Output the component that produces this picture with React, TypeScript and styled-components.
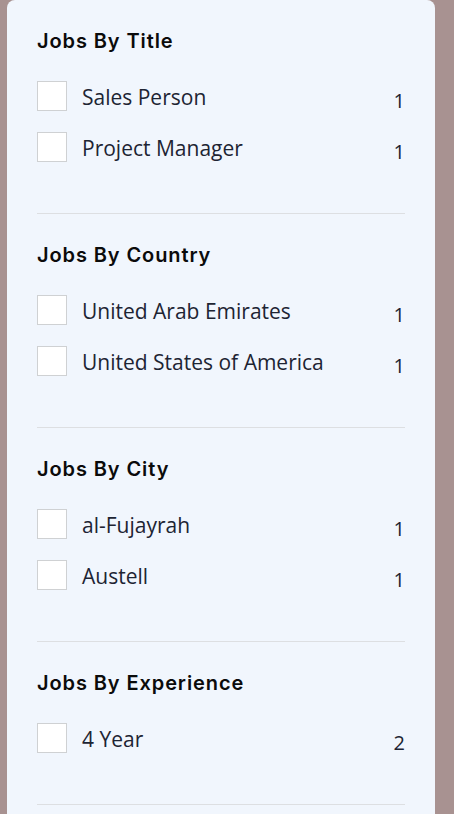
import React from "react";
import styled, { createGlobalStyle } from "styled-components";

const Global = createGlobalStyle`
  html, body { margin: 0; padding: 0; background: #a89291; }
  body { overflow: hidden; }
`;

const Page = styled.div`
  display: flex;
  padding-left: 7px;
  height: 814px;
`;

const Panel = styled.aside`
  width: 428px;
  box-sizing: border-box;
  background: #f1f6fd;
  border-radius: 8px 8px 0 0;
  padding: 0 30px;
  min-height: 900px;
`;

const Section = styled.section`
  padding: 29px 0 51px;
  border-bottom: 1px solid #dddfe2;
`;

const Heading = styled.h3`
  margin: 0 0 28px;
  font-family: "Inter", "Lato", sans-serif;
  font-weight: 600;
  font-size: 20px;
  line-height: 24px;
  color: #0b0b0b;
  letter-spacing: 0.9px;
`;

const List = styled.ul`
  list-style: none;
  margin: 0;
  padding: 0;
  display: flex;
  flex-direction: column;
  gap: 21px;
`;

const Row = styled.li`
  display: flex;
  align-items: center;
  height: 30px;
`;

const Box = styled.span`
  width: 28px;
  height: 28px;
  border: 1px solid #cfd1d3;
  background: #fff;
  flex: none;
`;

const Label = styled.span`
  margin-left: 15px;
  flex: 1;
  font-family: "Open Sans", sans-serif;
  font-size: 21px;
  line-height: 26px;
  color: #1d2433;
  margin-top: 2px;
`;

const Count = styled.span`
  font-family: "Open Sans", sans-serif;
  font-size: 20px;
  line-height: 26px;
  color: #1d2433;
  margin-top: 9px;
`;

const data = [
  { title: "Jobs By Title", items: [["Sales Person", 1], ["Project Manager", 1]] },
  { title: "Jobs By Country", items: [["United Arab Emirates", 1], ["United States of America", 1]] },
  { title: "Jobs By City", items: [["al-Fujayrah", 1], ["Austell", 1]] },
  { title: "Jobs By Experience", items: [["4 Year", 2]] },
];

export default function App() {
  return (
    <>
      <Global />
      <Page>
        <Panel>
          {data.map((s) => (
            <Section key={s.title}>
              <Heading>{s.title}</Heading>
              <List>
                {s.items.map(([label, n]) => (
                  <Row key={label as string}>
                    <Box />
                    <Label>{label}</Label>
                    <Count>{n}</Count>
                  </Row>
                ))}
              </List>
            </Section>
          ))}
        </Panel>
      </Page>
    </>
  );
}
